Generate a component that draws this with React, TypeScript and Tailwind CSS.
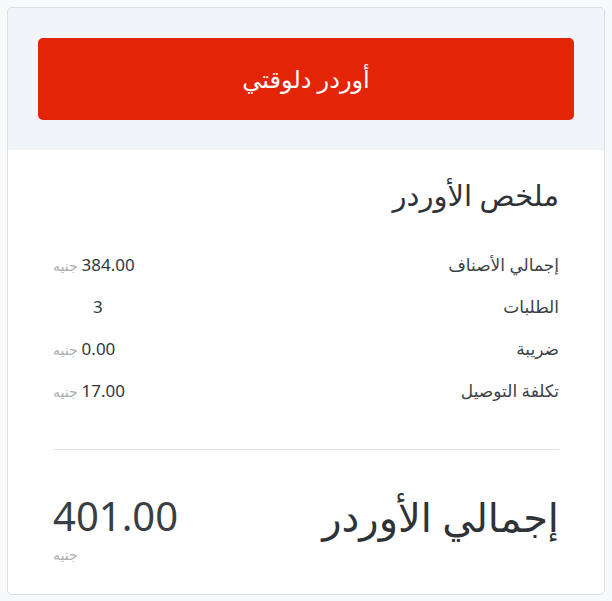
const rows = [
  { label: "إجمالي الأصناف", value: "384.00", currency: true },
  { label: "الطلبات", value: "3", currency: false },
  { label: "ضريبة", value: "0.00", currency: true },
  { label: "تكلفة التوصيل", value: "17.00", currency: true },
];

export default function App() {
  return (
    <div
      dir="rtl"
      className="min-h-[601px] bg-[#f8f9fb] p-[7px] font-['Noto_Sans','DejaVu_Sans',sans-serif]"
    >
      <div className="overflow-hidden rounded-[5px] border border-[#d9dee4] bg-white">
        <div className="bg-[#f1f4f8] px-[30px] py-[30px]">
          <button className="flex h-[82px] w-full items-center justify-center rounded-[5px] bg-[#e42407] text-[24px] text-white">
            أوردر دلوقتي
          </button>
        </div>

        <div className="px-[45px] pb-[30px] pt-[25px]">
          <h2 className="text-[29px] leading-[40px] text-[#2f3337]">ملخص الأوردر</h2>

          <div className="mt-[38px] flex flex-col gap-[18px]">
            {rows.map((row) => (
              <div key={row.label} className="flex h-[24px] items-center justify-between">
                <span className="text-[17px] leading-[24px] text-[#3d4145]">{row.label}</span>
                {row.currency ? (
                  <span className="flex items-baseline gap-[4px] leading-[24px]">
                    <span className="text-[17px] text-[#33373b]">{row.value}</span>
                    <span className="text-[14px] text-[#a9adb1]">جنيه</span>
                  </span>
                ) : (
                  <span className="ml-[40px] text-[17px] leading-[24px] text-[#33373b]">{row.value}</span>
                )}
              </div>
            ))}
          </div>

          <div className="mt-[46px] border-t border-[#dfe2e6]" />

          <div className="mt-[42px] flex items-start justify-between">
            <span className="text-[40px] leading-[50px] text-[#2f3337]">إجمالي الأوردر</span>
            <div className="flex flex-col items-end">
              <span className="text-[40px] leading-[48px] text-[#3a3e42]">401.00</span>
              <span className="mt-[6px] text-[14px] leading-[18px] text-[#a9adb1]">جنيه</span>
            </div>
          </div>
        </div>
      </div>
    </div>
  );
}
